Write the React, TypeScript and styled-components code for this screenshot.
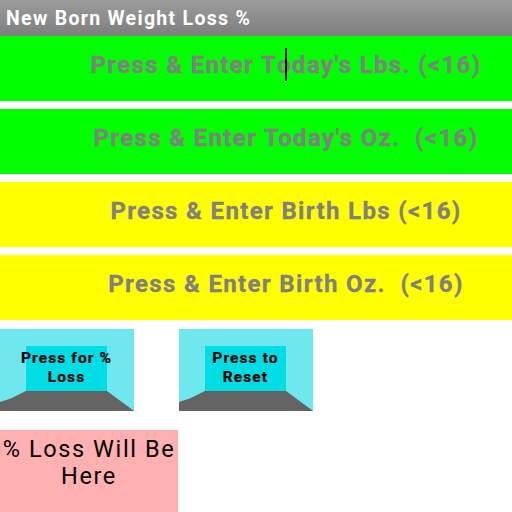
import styled, { createGlobalStyle } from "styled-components";

const GlobalStyle = createGlobalStyle`
  html, body {
    margin: 0;
    padding: 0;
    background: #ffffff;
    font-family: Roboto, "Liberation Sans", Arial, sans-serif;
  }
`;

type FieldType = {
  label: string;
  color: string;
  focused?: boolean;
};

const fields: FieldType[] = [
  { label: "Press & Enter Today's Lbs. (<16)", color: "#00ff00", focused: true },
  { label: "Press & Enter Today's Oz.  (<16)", color: "#00ff00" },
  { label: "Press & Enter Birth Lbs (<16)", color: "#ffff00" },
  { label: "Press & Enter Birth Oz.  (<16)", color: "#ffff00" },
];

const App = () => {
  return (
    <>
      <GlobalStyle />
      <Screen>
        <TitleBar>
          <Title>New Born Weight Loss %</Title>
        </TitleBar>
        <Fields>
          {fields.map((field) => (
            <Field key={field.label} $bg={field.color}>
              <Hint>
                {field.focused ? (
                  <>
                    Press &amp; Enter T<Caret />oday's Lbs. (&lt;16)
                  </>
                ) : (
                  field.label
                )}
              </Hint>
            </Field>
          ))}
        </Fields>
        <Buttons>
          <BevelButton>
            <ButtonLabel>
              Press for %<br />
              Loss
            </ButtonLabel>
          </BevelButton>
          <BevelButton>
            <ButtonLabel>
              Press to<br />
              Reset
            </ButtonLabel>
          </BevelButton>
        </Buttons>
        <Result>
          % Loss Will Be
          <br />
          Here
        </Result>
      </Screen>
    </>
  );
};

const Screen = styled.div`
  width: 512px;
  height: 512px;
  overflow: hidden;
  display: flex;
  flex-direction: column;
`;

const TitleBar = styled.div`
  height: 36px;
  display: flex;
  align-items: center;
  padding-left: 6px;
  background: linear-gradient(#9c9c9c, #7e7e7e);
`;

const Title = styled.h1`
  margin: 0;
  color: #ffffff;
  font-size: 19.5px;
  font-weight: 700;
  letter-spacing: 1.3px;
`;

const Fields = styled.div`
  display: flex;
  flex-direction: column;
  gap: 8px;
`;

const Field = styled.div<{ $bg: string }>`
  height: 65px;
  background: ${({ $bg }) => $bg};
  display: flex;
  align-items: center;
  justify-content: center;
  padding-left: 60px;
  padding-bottom: 8px;
  box-sizing: border-box;
`;

const Hint = styled.span`
  position: relative;
  color: #808080;
  font-size: 24px;
  font-weight: 700;
  letter-spacing: 1.35px;
  white-space: pre;
  -webkit-text-stroke: 0.3px #808080;
`;

const Caret = styled.span`
  position: absolute;
  display: inline-block;
  width: 2px;
  height: 33px;
  background: #000000;
  margin-top: -3px;
  margin-left: 8px;
`;

const Buttons = styled.div`
  display: flex;
  gap: 45px;
  margin-top: 9px;
`;

const BevelButton = styled.button`
  position: relative;
  width: 134px;
  height: 82px;
  box-sizing: border-box;
  border-style: solid;
  border-width: 17px 27px 20px 26px;
  border-color: #6ee8ee #6ee8ee #646464 #6ee8ee;
  background: #00dde4;
  padding: 0;
  display: flex;
  align-items: center;
  justify-content: center;
  overflow: visible;

  &::after {
    content: "";
    position: absolute;
    left: -26px;
    right: -27px;
    bottom: -20px;
    height: 20px;
    background: #646464;
    clip-path: polygon(0 100%, 0 55%, 8% 38%, 19.4% 0, 79.1% 0, 88% 45%, 100% 100%);
  }
`;

const ButtonLabel = styled.span`
  display: block;
  margin: 0 -30px 2px;
  color: #000000;
  font-family: Roboto, "Liberation Sans", Arial, sans-serif;
  font-size: 15.5px;
  font-weight: 700;
  letter-spacing: 1.1px;
  line-height: 19px;
  text-align: center;
  white-space: nowrap;
  -webkit-text-stroke: 0.2px #000000;
`;

const Result = styled.div`
  width: 178px;
  margin-top: 19px;
  flex: 1;
  background: #ffb0b0;
  color: #000000;
  font-size: 23.5px;
  letter-spacing: 1.6px;
  line-height: 27px;
  text-align: center;
  padding-top: 6px;
  box-sizing: border-box;
`;

export default App;
